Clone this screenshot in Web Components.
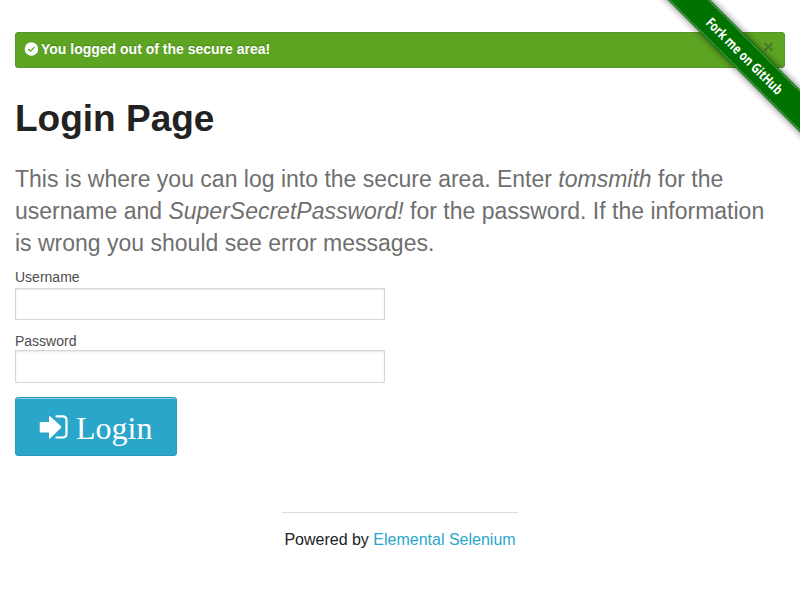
<!DOCTYPE html>
<html lang="en">
<head>
<meta charset="utf-8">
<title>Login Page</title>
<style>
html,body{margin:0;background:#fff}
body{font-family:"Liberation Sans",Arial,sans-serif;color:#222;height:600px;overflow:hidden;position:relative}
</style>
</head>
<body>
<login-page></login-page>
<script>
const define = (name, html) => customElements.define(name, class extends HTMLElement {
  constructor() {
    super();
    const t = document.createElement('template');
    t.innerHTML = html;
    this.attachShadow({mode: 'open'}).append(t.content.cloneNode(true));
    const label = this.shadowRoot.querySelector('label');
    if (label) {
      label.textContent = this.getAttribute('label');
      this.shadowRoot.querySelector('input').type = this.getAttribute('type') || 'text';
    }
  }
});

define('flash-message', `<style>
:host{display:flex;align-items:flex-start;box-sizing:border-box;height:36px;padding:8px 10px 0 8px;background:#5da423;border:1px solid #57962a;border-radius:3px;color:#fff;font-size:14px;line-height:17px;font-weight:bold;text-shadow:0 -1px 1px rgba(0,0,0,.2)}
svg{width:14px;height:14px;margin:1px 3px 0 0}
.text{flex:1}
.close{font-size:19px;line-height:12px;color:#333;opacity:.4;text-shadow:none}
</style><svg viewBox="0 0 14 14"><circle cx="7.4" cy="7" r="6.7" fill="#fff"/><path d="M4.2 7 6.6 9.2 10.4 5.2" fill="none" stroke="#5da423" stroke-width="1.2"/></svg>
<span class="text"><slot></slot></span><span class="close">×</span>`);

define('github-ribbon', `<style>
:host{position:absolute;top:0;right:0;width:149px;height:149px;display:block}
svg{display:block;width:149px;height:149px}
</style><svg viewBox="0 0 149 149">
<defs><filter id="s" x="-20%" y="-60%" width="140%" height="220%"><feGaussianBlur stdDeviation="3.5"/></filter></defs>
<g transform="translate(93 55) rotate(45)">
<rect x="-130" y="-15" width="260" height="30" fill="#000" opacity=".6" filter="url(#s)"/>
<rect x="-130" y="-15" width="260" height="30" fill="#007200"/>
<path d="M-130-13.7H130M-130 13.7H130" stroke="#73b573" stroke-width="1" stroke-dasharray="1.4 .7" fill="none"/>
<text x="-50" y="5.3" textLength="102" lengthAdjust="spacingAndGlyphs" font-family="Open Sans,sans-serif" font-size="13.8" font-weight="700" fill="#fff">Fork me on GitHub</text>
</g></svg>`);

define('form-field', `<style>
:host{display:block;width:370px}
label{display:block;font-size:14px;line-height:21px;height:var(--label-h,21px);color:#4d4d4d}
input{display:block;box-sizing:border-box;width:100%;height:var(--h,32px);margin:0;padding:8px;border:1px solid #d6d6d6;border-radius:0;background:#fff;box-shadow:inset 0 1px 2px rgba(0,0,0,.1);outline:0;font:14px "Liberation Sans",sans-serif}
</style><label></label><input>`);

define('login-button', `<style>
:host{display:block}
button{display:flex;align-items:center;box-sizing:border-box;width:162px;height:59px;margin:0;padding:0 0 0 23px;border:1px solid #2a98b9;border-radius:3px;background:#2ba6cb;box-shadow:inset 0 1px 0 rgba(255,255,255,.45);color:#fff;font:32px/36px "Liberation Serif","Times New Roman",serif}
svg{width:30px;height:26px;margin:0 7px 0 0;flex:none}
span{padding-top:2px}
</style><button type="button"><svg viewBox="0 0 30 26"><path d="M.7 9.2Q.7 8 1.9 8H10V3Q10 1.4 11.3 2.5L21.9 12.1Q22.7 13 21.9 13.9L11.3 24.3Q10 25.4 10 23.7V18.5H1.9Q.7 18.5.7 17.3Z" fill="#fff"/><path d="M17.4 2.3H23.5Q27.5 2.3 27.5 6.3V19.5Q27.5 23.5 23.5 23.5H17.4" fill="none" stroke="#fff" stroke-width="2.2" stroke-linecap="round"/></svg><span><slot></slot></span></button>`);

define('page-footer', `<style>
:host{display:block;width:236px;margin:0 auto;border-top:1px solid #ddd;padding-top:14px;text-align:center;font-size:16px;line-height:25px;color:#222;white-space:nowrap}
a{color:#2ba6cb;text-decoration:none}
</style>Powered by <a href="#"><slot></slot></a>`);

define('login-page', `<style>
:host{display:block;padding:32px 15px 0}
h2{margin:25px 0 0;font-size:37px;line-height:52px;color:#222}
h4{margin:18px 0 0;font-size:23px;line-height:32px;font-weight:normal;color:#6f6f6f}
.user{margin-top:8px}.pass{margin-top:11px;--h:33px;--label-h:19px}
login-button{margin-top:14px}
page-footer{margin-top:56px}
</style>
<flash-message>You logged out of the secure area!</flash-message>
<h2>Login Page</h2>
<h4>This is where you can log into the secure area. Enter <em>tomsmith</em> for the username and <em>SuperSecretPassword!</em> for the password. If the information is wrong you should see error messages.</h4>
<form-field class="user" label="Username"></form-field>
<form-field class="pass" label="Password" type="password"></form-field>
<login-button>Login</login-button>
<page-footer>Elemental Selenium</page-footer>
<github-ribbon></github-ribbon>`);
</script>
</body>
</html>
